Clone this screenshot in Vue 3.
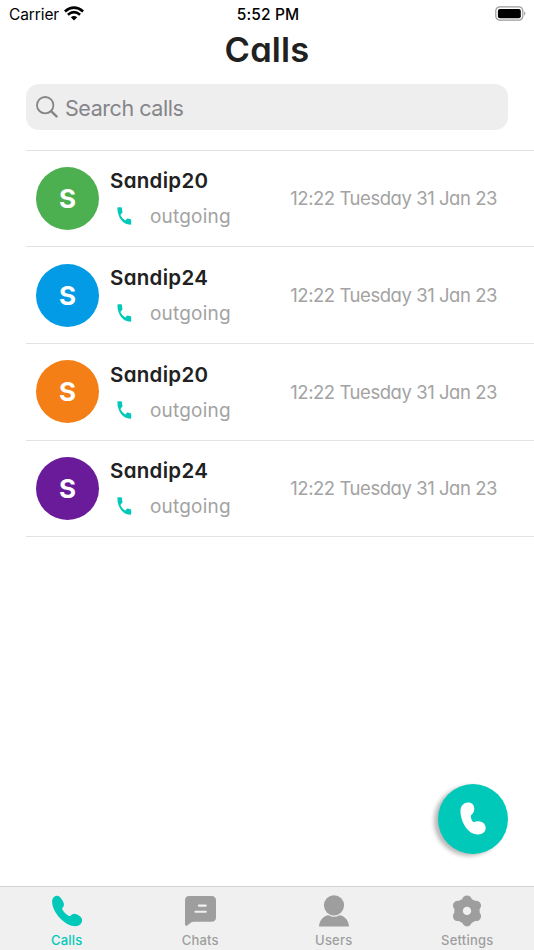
<script setup>
const calls = [
  { name: 'Sandip20', color: '#4caf50' },
  { name: 'Sandip24', color: '#039be5' },
  { name: 'Sandip20', color: '#f57f17' },
  { name: 'Sandip24', color: '#6a1b9a' },
]
const tabs = ['Calls', 'Chats', 'Users', 'Settings']
</script>

<template>
  <div class="screen">
    <header class="status">
      <div class="carrier">
        <span>Carrier</span>
        <svg width="20" height="15" viewBox="0 0 20 15">
          <path d="M.9 5.5 Q10 -2.2 19.1 5.5" fill="none" stroke="#000" stroke-width="2.7" />
          <path d="M3.9 8.7 Q10 3.6 16.1 8.7" fill="none" stroke="#000" stroke-width="2.6" />
          <path d="M6.8 11.3 Q10 8.5 13.2 11.3 L10 14.5Z" />
        </svg>
      </div>
      <div class="clock">5:52 PM</div>
      <svg class="battery" width="32" height="16" viewBox="0 0 32 16">
        <rect x=".8" y=".8" width="27" height="13.4" rx="4" fill="none" stroke="#999" stroke-width="1.2" />
        <rect x="2.9" y="2.9" width="22.9" height="9.3" rx="2" />
        <path d="M29.3 5.3Q31.4 7.5 29.3 9.7Z" fill="#888" />
      </svg>
    </header>
    <h1><span>Calls</span></h1>
    <div class="search">
      <svg width="22" height="22" viewBox="0 0 22 22" fill="none" stroke="#85858a">
        <circle cx="9.2" cy="9.2" r="8.2" stroke-width="1.8" />
        <path d="M15.1 15.1L20.5 20.4" stroke-width="2.4" stroke-linecap="round" />
      </svg>
      <span>Search calls</span>
    </div>
    <main class="list">
      <article v-for="(call, i) in calls" :key="i" class="row">
        <div class="avatar" :style="{ background: call.color }">S</div>
        <div class="info">
          <div class="name">{{ call.name }}</div>
          <div class="direction">
            <svg width="15" height="18" viewBox="0 0 15 18">
              <path d="M.4 1Q.4 .2 1.2 .2H4Q4.8 .2 4.9 1Q5 3 5.5 4.7Q5.6 5.2 5.2 5.7L3.4 8Q5 11.7 8.3 13.6L10 11.8Q10.4 11.4 10.9 11.6L13.6 12.3Q14.2 12.5 14.2 13.2V16.8Q14.2 17.7 13.4 17.7C6 17.7 .4 10.5 .4 1Z" fill="#00c9b9" />
            </svg>
            <span>outgoing</span>
          </div>
        </div>
        <time>12:22 Tuesday 31 Jan 23</time>
      </article>
    </main>
    <div class="actions">
      <button class="fab" aria-label="New call">
        <svg width="26" height="34" viewBox="0 0 26 34">
          <path d="M.5 8C.8 3.5 4 .7 8 .5C12 .3 14.5 3.3 14.3 7.2C14.2 10.4 12.3 12 11 13.3C10.6 16.5 11.7 18.5 13.5 20.2C16 19 19.5 18.7 22.3 20.3C25.3 22 26.4 25.5 25.2 28.4C23.6 32.3 18 33.3 13.7 31.8C5.4 28.6 0 17 .5 8Z" fill="#fff" />
        </svg>
      </button>
    </div>
    <nav class="tabs">
      <div v-for="tab in tabs" :key="tab" class="tab" :class="tab.toLowerCase()">
        <svg width="32" height="32" viewBox="0 0 32 32" fill="currentColor">
          <path v-if="tab === 'Calls'" d="M1.1 6.7C1 3.4 3.3 .7 6 .7C8.1 .7 9.4 2.3 10.7 4.3C12.3 6.8 13.5 8.7 12.7 10.9C12.2 12.4 10.7 13.2 11.3 14.4C12.8 17.2 15.4 19.4 17.9 20.9C19.1 21.5 20 20 21.3 19.2C23.4 18 25.5 18.9 27.8 20.5C29.9 21.9 31.3 23.3 31.1 25.5C30.8 28.6 28.1 31.2 24.7 31.2C13.8 31.2 1.4 17.6 1.1 6.7Z" />
          <template v-else-if="tab === 'Chats'">
            <path d="M5 1H27.5Q32 1 32 5.5V22.3Q32 26.7 27.5 26.7H9.3Q8 26.7 7 27.5L3.3 30.4Q1 31.7 1 28.8V5.5Q1 1 5 1Z" />
            <path d="M14.9 10.6H21.8M11.4 16.7H21.8" stroke="#f0f0f0" stroke-width="2.1" stroke-linecap="round" />
          </template>
          <template v-else-if="tab === 'Users'">
            <path d="M1 31.6C1.2 25.5 5.5 20.6 10.7 20.2Q16 23.4 21.3 20.2C26.6 20.6 30.8 25.5 31 31.6Z" />
            <circle cx="16" cy="10.3" r="10.1" />
          </template>
          <template v-else>
            <circle cx="16" cy="15.9" r="12.7" />
            <circle v-for="a in 6" :key="a" cx="16" cy="5.2" r="4.8" :transform="`rotate(${a * 60} 16 15.9)`" />
            <circle cx="16" cy="15.9" r="4.2" fill="#f0f0f0" />
          </template>
        </svg>
        <span>{{ tab }}</span>
      </div>
    </nav>
  </div>
</template>

<style>
body { margin: 0; background: #fff; }
</style>
<style scoped>
.screen { width: 534px; height: 950px; display: flex; flex-direction: column; background: #fff; font-family: Inter, "Liberation Sans", sans-serif; overflow: hidden; white-space: nowrap; }
.status { height: 28px; flex: none; box-sizing: border-box; padding: 0 7px 0 9px; display: grid; grid-template-columns: 1fr auto 1fr; align-items: center; font-size: 15.5px; line-height: 28px; color: #000; }
.carrier { display: flex; align-items: center; gap: 5px; }
.carrier span { letter-spacing: -.1px; padding-top: 1px; }
.carrier svg { margin-top: -2px; }
.clock { font-weight: 500; letter-spacing: .15px; padding-top: 1px; }
.battery { justify-self: end; margin-top: -2px; }
h1 { margin: 0; height: 56px; flex: none; text-align: center; font-size: 34.5px; line-height: 44px; letter-spacing: .2px; font-weight: 600; color: #212121; font-feature-settings: "cv11"; }
.search { margin: 0 26px; height: 46px; flex: none; border-radius: 13px; background: #eee; display: flex; align-items: center; padding-left: 10px; gap: 7px; color: #85858a; font-size: 21.5px; line-height: 46px; letter-spacing: -.45px; }
.search span { padding-top: 1px; }
.list { margin: 19.5px 0 0 26px; border-top: 1px solid #e3e3e3; font-feature-settings: "cv11"; }
.row { height: 96.7px; box-sizing: border-box; border-bottom: 1px solid #e3e3e3; padding: 0 37px 0 10px; display: flex; align-items: center; }
.avatar { width: 63px; height: 63px; border-radius: 50%; color: #fff; font-size: 26px; font-weight: 700; display: flex; align-items: center; justify-content: center; margin-right: 11px; }
.info { display: flex; flex-direction: column; gap: 11px; padding-top: 2px; }
.name { font-size: 20.5px; line-height: 24px; font-weight: 600; color: #212121; letter-spacing: .3px; }
.direction { display: flex; align-items: center; gap: 18px; padding-left: 7px; font-size: 19px; line-height: 24px; color: #a3a3a3; letter-spacing: .2px; }
.direction svg { margin-top: -1px; }
.direction span { padding-top: 1px; }
time { margin-left: auto; font-size: 18.5px; color: #a3a3a3; letter-spacing: -.45px; }
.actions { margin-top: auto; display: flex; justify-content: flex-end; padding: 0 26px 32.5px 0; }
.fab { width: 70px; height: 70px; padding: 0; border: 0; border-radius: 50%; background: #00c9b9; box-shadow: -4px 2px 4px rgba(0,0,0,.28); display: flex; align-items: center; justify-content: center; }
.tabs { height: 64px; flex: none; box-sizing: border-box; border-top: 1px solid #d2d2d2; background: #f0f0f0; display: grid; grid-template-columns: repeat(4, 1fr); }
.tab { display: flex; flex-direction: column; align-items: center; padding-top: 8px; color: #9e9e9e; font-size: 13px; line-height: 16px; font-weight: 500; letter-spacing: .2px; gap: 5px; }
.calls { color: #00c9b9; }
</style>
